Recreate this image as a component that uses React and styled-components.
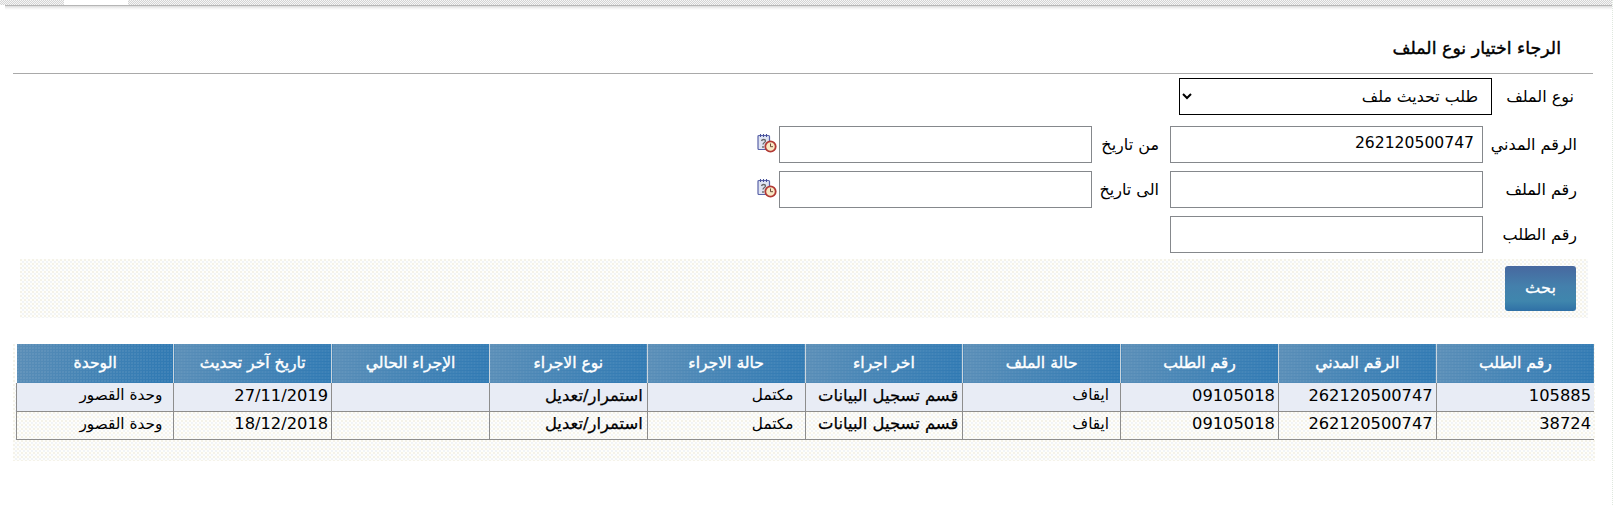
import React from "react";
import styled, { createGlobalStyle } from "styled-components";

const dots = `radial-gradient(circle at 1px 1px, #f1eee3 0.6px, transparent 1px), radial-gradient(circle at 3px 3px, #edf0f5 0.6px, transparent 1px)`;
const FONT = `"DejaVu Sans", sans-serif`;

const Global = createGlobalStyle`
  html, body { margin: 0; padding: 0; background: #fff; }
  body { font-family: ${FONT}; color: #000; width: 1615px; height: 505px; overflow: hidden; }
  #root { width: 1615px; }
`;

const Page = styled.div`
  direction: rtl;
  width: 1613px;
  height: 505px;
  box-sizing: border-box;
  border-right: 1px dotted #dfe8df;
`;

const StripTop = styled.div`
  direction: ltr;
  height: 5px;
  display: flex;
`;

const StripPiece = styled.div`
  width: ${(p) => (p.$w ? `${p.$w}px` : "auto")};
  flex: ${(p) => (p.$w ? "none" : "1")};
  background: ${(p) => (p.$blank ? "#fff" : "repeating-conic-gradient(#d4d4d4 0 25%, #f6f6f6 0 50%) 0 0 / 2px 2px")};
`;

const StripLine = styled.div`
  height: 5px;
  margin-left: 5px;
  background: linear-gradient(#b6b6b6 0, #b6b6b6 1px, #dcdcdc 1px, #f2f2f2 3px, #fff 5px);
`;

const Title = styled.h1`
  margin: 27px 51px 0 0;
  height: 36px;
  font-size: 17.4px;
  line-height: 22px;
  font-weight: normal;
  -webkit-text-stroke: 0.4px #000;
`;

const Rule = styled.hr`
  margin: 0 19px 0 0;
  width: 1580px;
  border: 0;
  border-top: 1px solid #a9a9a9;
  height: 0;
`;

const TypeRow = styled.div`
  display: flex;
  align-items: center;
  margin: 4px 35px 11px 0;
`;

const Form = styled.div`
  display: grid;
  grid-template-columns: 94px 313px 78px 313px 22px;
  grid-auto-rows: 37px;
  row-gap: 8px;
  margin-right: 35px;
  justify-content: start;
  align-items: center;
`;

const Label = styled.label`
  font-size: 16px;
  line-height: 20px;
  white-space: nowrap;
`;

const TypeLabel = styled(Label)`
  width: 85px;
  box-sizing: border-box;
  padding-right: 3px;
`;

const DateLabel = styled(Label)`
  padding-right: 11px;
`;

const Select = styled.select`
  width: 313px;
  height: 37px;
  box-sizing: border-box;
  border: 1px solid #000;
  background: #fff;
  font-family: ${FONT};
  font-size: 15.8px;
  padding: 0 9px 0 4px;
  color: #000;
  border-radius: 0;
`;

const Input = styled.input`
  width: 313px;
  height: 37px;
  box-sizing: border-box;
  border: 1px solid #85888c;
  background: #fff;
  font-family: ${FONT};
  font-size: 15.6px;
  padding: 0 8px 3px;
  direction: rtl;
  color: #000;
`;

const DateIcon = styled.span`
  display: block;
  width: 20px;
  height: 20px;
  margin-right: 2px;
  margin-top: 7px;
  align-self: start;
`;

const SearchPanel = styled.div`
  width: 1568px;
  height: 59px;
  box-sizing: border-box;
  margin: 6px 24px 0 0;
  padding: 7px 12px 0 0;
  background-color: #fefefb;
  background-image: ${dots};
  background-size: 4px 4px;
`;

const SearchButton = styled.button`
  display: block;
  width: 71px;
  height: 45px;
  border: 0;
  border-radius: 3px;
  color: #fff;
  font-family: ${FONT};
  font-size: 16.2px;
  -webkit-text-stroke: 0.3px #fff;
  padding: 0 0 2px;
  background: linear-gradient(#47689f 0, #4480ac 45%, #3f86ad 78%, #2f70a6 100%);
`;

const TableArea = styled.div`
  width: 1582px;
  margin: 26px 17px 0 0;
  padding-bottom: 21px;
  background-color: #fefefb;
  background-image: ${dots};
  background-size: 4px 4px;
`;

const Table = styled.table`
  width: 1579px;
  table-layout: fixed;
  border-collapse: collapse;
  margin: 0 1px 0 2px;
`;

const Th = styled.th`
  height: 39px;
  padding: 0 0 2px;
  box-sizing: border-box;
  color: #fff;
  font-size: 15.6px;
  font-weight: normal;
  -webkit-text-stroke: 0.4px #fff;
  text-align: center;
  border: 0;
  border-left: 1px solid #c9d5de;
  background:
    radial-gradient(circle at 1px 1px, rgba(255, 255, 255, 0.07) 0.7px, transparent 1px) 0 0 / 3px 3px,
    linear-gradient(100deg, #5b8eb7 0, #4584b5 45%, #2f79b3 100%);
  &:last-child { border-left: 2px solid #fff; }
`;

const Tr = styled.tr`
  background-color: ${(p) => (p.$shaded ? "#e8ecf5" : "transparent")};
`;

const cellType = {
  num: "font-size: 16.3px; padding-right: 3px;",
  text: "font-size: 15.3px; padding-right: 11px;",
  strong: "font-size: 16.4px; padding-right: 4px; -webkit-text-stroke: 0.25px #000;",
};

const Td = styled.td`
  height: 28px;
  box-sizing: border-box;
  padding-top: 0;
  padding-bottom: 3px;
  padding-left: 2px;
  border: 1px solid #8d8d8d;
  border-top: 0;
  ${(p) => cellType[p.$type || "num"]}
  text-align: right;
  white-space: nowrap;
  overflow: hidden;
  &:first-child { border-right: 0; }
`;

const CalendarClock = () => (
  <svg width="20" height="20" viewBox="0 0 20 20">
    <rect x="1" y="2.5" width="11.5" height="14" rx="1" fill="#dfe4f2" stroke="#5a63a8" strokeWidth="1.2" />
    <path d="M3.5 1v3M6.5 1v3M9.5 1v3" stroke="#47509a" strokeWidth="1.1" />
    <path d="M4.5 8c.5-2 4-2 4 0 0 1.500-2.500 1.500-2.500 3.500" fill="none" stroke="#666" strokeWidth="1.3" />
    <circle cx="6" cy="14" r=".9" fill="#666" />
    <circle cx="13.500" cy="13.500" r="5.200" fill="#f8e8c4" stroke="#b23a35" strokeWidth="1.800" />
    <path d="M13.500 10.500v3.200h2.500" fill="none" stroke="#6d4a3a" strokeWidth="1" />
  </svg>
);

const headers = ["رقم الطلب", "الرقم المدني", "رقم الطلب", "حالة الملف", "اخر اجراء", "حالة الاجراء", "نوع الاجراء", "الإجراء الحالي", "تاريخ آخر تحديث", "الوحدة"];
const rows = [
  ["105885", "27/11/2019"],
  ["38724", "18/12/2018"],
];

export default function App() {
  return (
    <Page>
      <Global />
      <StripTop>
        <StripPiece $w={64} />
        <StripPiece $w={64} $blank />
        <StripPiece />
      </StripTop>
      <StripLine />
      <Title>الرجاء اختيار نوع الملف</Title>
      <Rule />
      <TypeRow>
        <TypeLabel>نوع الملف</TypeLabel>
        <Select defaultValue="update">
          <option value="update">طلب تحديث ملف</option>
        </Select>
      </TypeRow>
      <Form>
        <Label>الرقم المدني</Label>
        <Input defaultValue="262120500747" />
        <DateLabel>من تاريخ</DateLabel>
        <Input />
        <DateIcon><CalendarClock /></DateIcon>
        <Label>رقم الملف</Label>
        <Input />
        <DateLabel>الى تاريخ</DateLabel>
        <Input />
        <DateIcon><CalendarClock /></DateIcon>
        <Label>رقم الطلب</Label>
        <Input />
      </Form>
      <SearchPanel>
        <SearchButton>بحث</SearchButton>
      </SearchPanel>
      <TableArea>
        <Table>
          <thead>
            <tr>{headers.map((h, i) => <Th key={i}>{h}</Th>)}</tr>
          </thead>
          <tbody>
            {rows.map(([id, date], i) => (
              <Tr key={id} $shaded={i === 0}>
                <Td>{id}</Td>
                <Td>262120500747</Td>
                <Td>09105018</Td>
                <Td $type="text">ايقاف</Td>
                <Td $type="strong">قسم تسجيل البيانات</Td>
                <Td $type="text">مكتمل</Td>
                <Td $type="strong">استمرار/تعديل</Td>
                <Td />
                <Td>{date}</Td>
                <Td $type="text">وحدة القصور</Td>
              </Tr>
            ))}
          </tbody>
        </Table>
      </TableArea>
    </Page>
  );
}
